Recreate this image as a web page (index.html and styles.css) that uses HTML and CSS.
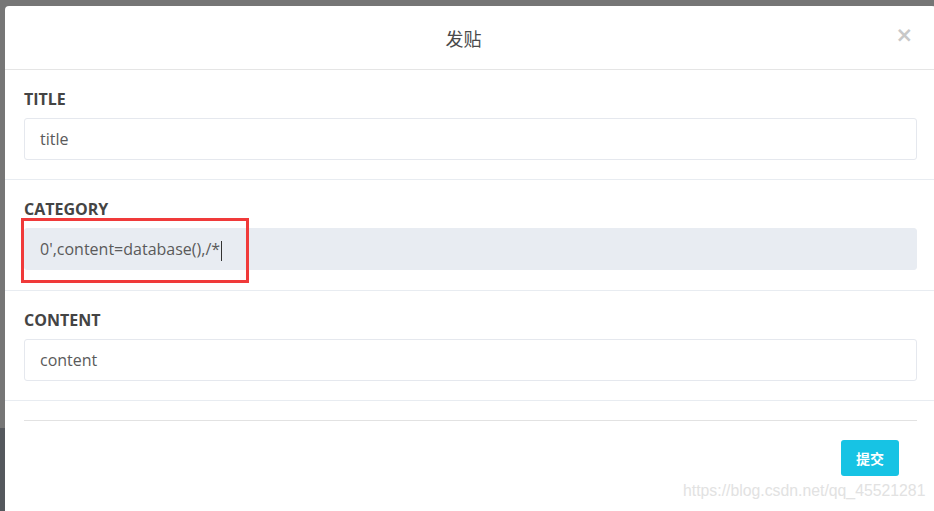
FILE: index.html
```html
<!DOCTYPE html>
<html lang="zh-CN">
<head>
    <meta charset="UTF-8">
    <title>发贴</title>
    <link rel="stylesheet" href="styles.css">
</head>
<body>
    <div class="modal">
        <div class="modal-header">
            <h4 class="modal-title">发贴</h4>
            <span class="close">&times;</span>
        </div>

        <div class="form-group">
            <label>TITLE</label>
            <div class="field">title</div>
        </div>

        <div class="form-group">
            <label>CATEGORY</label>
            <div class="field active">0',content=database(),/*<span class="caret"></span></div>
        </div>

        <div class="form-group">
            <label>CONTENT</label>
            <div class="field">content</div>
        </div>

        <div class="modal-footer">
            <hr>
            <div class="actions">
                <button>提交</button>
            </div>
        </div>
    </div>

    <!-- 截图标注 -->
    <div class="mark"></div>
    <div class="watermark">https://blog.csdn.net/qq_45521281</div>
</body>
</html>
```

FILE: styles.css
```css
* {
    box-sizing: border-box;
    margin: 0;
    padding: 0;
}
html, body {
    height: 100%;
    overflow: hidden;
}
body {
    font-family: 'Open Sans', 'Noto Sans CJK SC', sans-serif;
    background: linear-gradient(to bottom, #767676 428px, #55585d 428px);
    padding: 6px 0 0 5px;
    position: relative;
}
.modal {
    width: 931px;
    height: 520px;
    background: white;
    border-radius: 4px 4px 0 0;
}
.modal-header {
    height: 64px;
    border-bottom: 1px solid #e5e5e5;
    display: flex;
    align-items: center;
    justify-content: center;
    position: relative;
    padding-right: 14px;
}
.modal-title {
    font-family: 'Noto Sans CJK SC', sans-serif;
    font-weight: 400;
    font-size: 18px;
    color: #4a4a4a;
}
.close {
    position: absolute;
    right: 23px;
    top: 17px;
    font-family: 'DejaVu Sans', sans-serif;
    font-size: 21px;
    font-weight: bold;
    color: #c8c8c8;
}
.form-group {
    padding: 19px 19px 19px 19px;
    border-bottom: 1px solid #e8ecf1;
}
.form-group:nth-child(3) {
    padding-bottom: 20px;
}
label {
    display: block;
    font-size: 16px;
    font-weight: 700;
    line-height: 20px;
    color: #444;
    margin-bottom: 9px;
}
.field {
    height: 42px;
    border: 1px solid #e5e8ee;
    border-radius: 3px;
    padding: 0 15px;
    font-size: 16px;
    line-height: 40px;
    color: #5a5a5a;
}
.field.active {
    background: #e8ecf2;
    border-color: #e8ecf2;
}
.caret {
    display: inline-block;
    width: 1px;
    height: 20px;
    background: #333;
    vertical-align: middle;
    margin-left: 1px;
}
.modal-footer {
    padding: 19px 19px 0 19px;
}
hr {
    border: none;
    border-top: 1px solid #e2e2e2;
}
.actions {
    display: flex;
    justify-content: flex-end;
    padding: 19px 18px 0 0;
}
button {
    width: 58px;
    height: 36px;
    background: #17c3e4;
    border: none;
    border-radius: 3px;
    color: white;
    font-family: 'Noto Sans CJK SC', sans-serif;
    font-size: 14px;
    font-weight: 700;
}
.mark {
    position: absolute;
    left: 21px;
    top: 218px;
    width: 228px;
    height: 65px;
    border: 3px solid #f03a3a;
}
.watermark {
    position: absolute;
    left: 683px;
    top: 482px;
    font-family: 'Liberation Sans', sans-serif;
    font-size: 15.8px;
    color: #e2e2e2;
}
```
